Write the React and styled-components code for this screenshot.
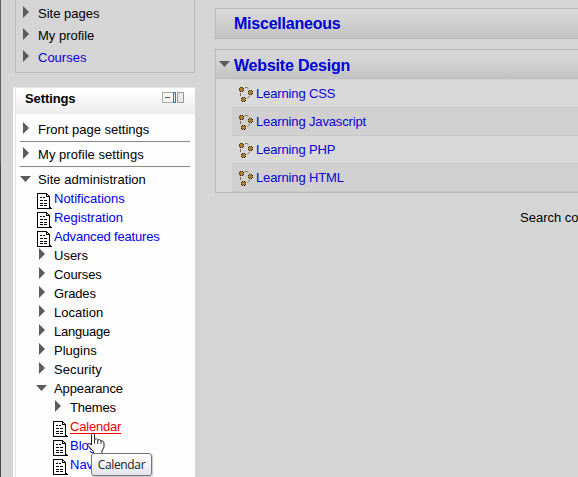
import React from "react";
import styled, { createGlobalStyle } from "styled-components";

const Global = createGlobalStyle`
  * { box-sizing: border-box; }
  body {
    margin: 0;
    overflow: hidden;
    background: #d5d5d5;
    color: #000;
    font: 13px/19px "Liberation Sans", Arial, sans-serif;
  }
`;

const Page = styled.div`
  position: relative;
  display: flex;
  width: 578px;
  height: 477px;
  overflow: hidden;
`;

const Edge = styled.div`
  width: 1px;
  background: linear-gradient(#626264 0, #626264 160px, #48484e 168px, #48484e 100%);
`;

const Sidebar = styled.aside`
  width: 182px;
  margin-left: 12px;
`;

const NavBlock = styled.nav`
  height: 73px;
  width: 180px;
  margin-left: 2px;
  padding: 4px 0 0 7px;
  border: 1px solid #bbb;
  border-top: 0;
`;

const SettingsBlock = styled.section`
  height: 390px;
  margin-top: 14px;
  border-left: 2px solid #fafafa;
  background: #fdfdfd;
`;

const SettingsHeader = styled.header`
  display: flex;
  justify-content: space-between;
  height: 27px;
  padding: 1px 10px 0 9px;
  border-top: 1px solid #e6e6e6;
  border-left: 1px solid #e6e6e6;
  background: linear-gradient(#fff, #fbfbfb 35%, #ebebeb);
`;

const Heading = styled.h2`
  margin: 0;
  font-size: 13px;
  line-height: 19px;
  letter-spacing: -0.1px;
`;

const Tree = styled.div`
  height: 363px;
  padding: 6px 5px 0 4px;
  border-left: 1px solid #e4e4e4;
`;

const TreeRow = styled.div`
  display: flex;
  height: ${(p) => p.$h || 19}px;
  padding-left: ${(p) => p.$indent || 0}px;
  line-height: 19px;
`;

const Section = styled.div`
  height: ${(p) => p.$h}px;
  padding-top: ${(p) => p.$top || 0}px;
  border-bottom: ${(p) => (p.$last ? 0 : "1px solid #888")};
`;

const IconCell = styled.span`
  flex: none;
  width: ${(p) => p.$w || 18}px;
  height: 19px;
  svg { display: block; margin: ${(p) => p.$offset || "0"}; }
`;

const Label = styled.span`
  color: ${(p) => p.$color || "#000"};
  letter-spacing: ${(p) => p.$track || 0}px;
  text-decoration: ${(p) => (p.$underline ? "underline" : "none")};
  text-underline-offset: 2px;
  text-decoration-skip-ink: none;
  white-space: nowrap;
`;

const Main = styled.main`
  width: 363px;
  margin-left: 20px;
  padding-top: 8px;
`;

const Category = styled.section`
  margin-bottom: ${(p) => p.$gap || 0}px;
  border: 1px solid #b9b9b9;
  border-right: 0;
  background: #d9d9d9;
`;

const CategoryHead = styled.h3`
  display: flex;
  height: 29px;
  margin: 0;
  padding-left: 3px;
  font-size: 16px;
  line-height: ${(p) => p.$line || 29}px;
  background: linear-gradient(#d9d9d9, #d3d3d3 35%, #c2c2c2);
`;

const CourseList = styled.div`
  margin-left: 16px;
  border-top: 1px solid #d0d0d0;
`;

const Course = styled.div`
  display: flex;
  height: 28px;
  padding-left: 7px;
  line-height: 27px;
  border-bottom: 1px solid #cacaca;
  background: ${(p) => (p.$shade ? "#d0d0d0" : "#d9d9d9")};
`;

const Search = styled.div`
  margin: 15px 0 0 305px;
  white-space: nowrap;
`;

const Tooltip = styled.div`
  position: absolute;
  left: 91px;
  top: 453px;
  width: 61px;
  height: 23px;
  border: 1px solid #767676;
  border-radius: 3px;
  background: linear-gradient(#fff, #e5e5f0);
  box-shadow: 1px 1px 1px #0003;
  color: #222;
  font: 12px/22px "Open Sans", "Noto Sans", sans-serif;
  letter-spacing: -0.35px;
  text-align: center;
`;

const Pointer = styled.svg`
  position: absolute;
  left: 87px;
  top: 432px;
`;

const RightArrow = () => (
  <svg width="6" height="12" viewBox="0 0 6 12"><path d="M0 0L6 6L0 12Z" fill="#5b5b5b" /></svg>
);

const DownArrow = () => (
  <svg width="11" height="6" viewBox="0 0 11 6"><path d="M0 0H11L5.5 6Z" fill="#5b5b5b" /></svg>
);

const PageIcon = () => (
  <svg width="15" height="16" viewBox="0 0 15 16" shapeRendering="crispEdges">
    <path d="M1 1H9L12 4V14H1Z" fill="#fff" />
    <path d="M0 0H10V1H0ZM0 0H1V16H0ZM0 15H13V16H0ZM12 3H13V16H12ZM9 1H10V4H9ZM9 3H13V4H9ZM10 1H11V2H10ZM11 2H12V3H11ZM13 14H14V16H13ZM14 15H15V16H14Z" fill="#000" />
    <path d="M3 4.5H5M6 4.5H8M3 7.5H6M7 7.5H10M3 10.5H6M7 10.5H10M3 12.5H6M7 12.5H10" stroke="#000" />
  </svg>
);

const NODE_POINTS = [[2.5, 2.5], [11.5, 5.5], [4.5, 12.5]];

const CourseIcon = () => (
  <svg width="14" height="15" viewBox="0 0 14 15">
    <path d="M6 .5H8L10 2M11 8.5L8 12M1.5 6V10" fill="none" stroke="#80664c" strokeDasharray="3 1" />
    {NODE_POINTS.map(([x, y]) => (
      <g key={x} shapeRendering="crispEdges">
        <path d={`M${x - 1.5} ${y - 2.5}h3v1h1v3h-1v1h-3v-1h-1v-3h1Z`} fill="#302617" />
        <path d={`M${x - 1.5} ${y - 1.5}h3v3h-3ZM${x - 0.5} ${y - 2.5}h1v5h-1ZM${x - 2.5} ${y - 0.5}h5v1h-5Z`} fill="#b07f2b" />
      </g>
    ))}
  </svg>
);

const BlockControls = () => (
  <svg width="23" height="12" viewBox="0 0 23 12" shapeRendering="crispEdges">
    <path d="M.5 .5H11V10.5H.5Z" fill="#f7f7f7" stroke="#aaa" />
    <path d="M3 5.5H8" stroke="#555" />
    <path d="M11.5 .5H13.5V10.5H11.5Z" fill="#d8efff" stroke="#0b83df" />
    <path d="M15.5 .5H21.5V10.5H15.5Z" fill="#e8e8e8" stroke="#999" />
  </svg>
);

const NAV = [["Site pages"], ["My profile"], ["Courses", "#0c00d4"]];
const LINKS = [["Notifications", 0], ["Registration", -0.04], ["Advanced features", -0.16]];
const BRANCHES = [
  ["Users", 0], ["Courses", -0.1], ["Grades", -0.15], ["Location", 0],
  ["Language", -0.22], ["Plugins", 0], ["Security", 0.1],
];
const COURSES = ["Learning CSS", "Learning Javascript", "Learning PHP", "Learning HTML"];

const Branch = ({ children, indent, open, track }) => (
  <TreeRow $indent={indent}>
    <IconCell $offset={open ? "6px 0 0 0" : "2px 0 0 3px"}>{open ? <DownArrow /> : <RightArrow />}</IconCell>
    <Label $track={track}>{children}</Label>
  </TreeRow>
);

const PageLink = ({ children, indent, active, track }) => (
  <TreeRow $indent={indent}>
    <IconCell $w={17} $offset="4px 0 0 0"><PageIcon /></IconCell>
    <Label $track={track} $color={active ? "#f00000" : "#00e"} $underline={active}>{children}</Label>
  </TreeRow>
);

export default function App() {
  return (
    <>
      <Global />
      <Page>
        <Edge />
        <Sidebar>
          <NavBlock>
            {NAV.map(([name, color]) => (
              <TreeRow key={name} $h={22}>
                <IconCell $w={15} $offset="2px 0 0 0"><RightArrow /></IconCell>
                <Label $color={color}>{name}</Label>
              </TreeRow>
            ))}
          </NavBlock>
          <SettingsBlock>
            <SettingsHeader>
              <Heading>Settings</Heading>
              <IconCell $w={23} $offset="3px 0 0 0"><BlockControls /></IconCell>
            </SettingsHeader>
            <Tree>
              <Section $h={22}><Branch>Front page settings</Branch></Section>
              <Section $h={25} $top={3}><Branch track={0.05}>My profile settings</Branch></Section>
              <Section $h={22} $top={3} $last>
                <Branch open track={0.05}>Site administration</Branch>
              </Section>
              {LINKS.map(([name, track]) => <PageLink key={name} indent={17} track={track}>{name}</PageLink>)}
              {BRANCHES.map(([name, track]) => <Branch key={name} indent={16} track={track}>{name}</Branch>)}
              <Branch indent={16} open track={-0.12}>Appearance</Branch>
              <Branch indent={32} track={-0.2}>Themes</Branch>
              <PageLink indent={33} active track={-0.2}>Calendar</PageLink>
              <PageLink indent={33}>Blogs</PageLink>
              <PageLink indent={33}>Navigation</PageLink>
            </Tree>
          </SettingsBlock>
        </Sidebar>
        <Main>
          <Category $gap={10}>
            <CategoryHead>
              <IconCell $w={15} />
              <Label $color="#0000d5" $track={-0.22}>Miscellaneous</Label>
            </CategoryHead>
          </Category>
          <Category>
            <CategoryHead $line={31}>
              <IconCell $w={15} $offset="11px 0 0 0"><DownArrow /></IconCell>
              <Label $color="#0000d5" $track={-0.2}>Website Design</Label>
            </CategoryHead>
            <CourseList>
              {COURSES.map((name, i) => (
                <Course key={name} $shade={i % 2 === 1}>
                  <IconCell $w={17} $offset="7px 0 0 0"><CourseIcon /></IconCell>
                  <Label $color="#0c00d4" $track={-0.14}>{name}</Label>
                </Course>
              ))}
            </CourseList>
          </Category>
          <Search>Search courses:</Search>
        </Main>
        <Pointer width="18" height="24" viewBox="0 0 18 24">
          <path d="M4.5 13V2.5Q6-.5 7.5 2.5V7.5Q9.5 5.5 10.7 8Q13 6.5 14 9Q16.8 8 17 12V15L15 19V21.5H6.5V19.5L1 13.5Q.5 9.5 4.5 13Z" fill="#fff" stroke="#222" />
          <path d="M7.5 7.5V11.5M10.7 8V12M14 9V12" stroke="#333" />
        </Pointer>
        <Tooltip>Calendar</Tooltip>
      </Page>
    </>
  );
}
